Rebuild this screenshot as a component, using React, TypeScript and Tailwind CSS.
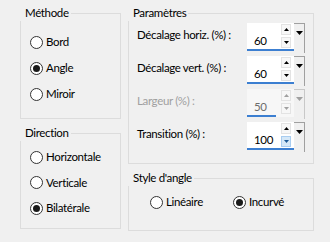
const FONT = "font-['Segoe_UI','Lato',sans-serif] tracking-[-0.35px]";

function Radio({ label, checked }: { label: string; checked?: boolean }) {
  return (
    <div className="flex h-[14px] items-center">
      <span className="flex h-[13px] w-[13px] shrink-0 items-center justify-center rounded-full border border-[#333] bg-white">
        {checked && <span className="h-[7px] w-[7px] rounded-full bg-[#1a1a1a]" />}
      </span>
      <span className="ml-[3px] whitespace-nowrap leading-[16px]">{label}</span>
    </div>
  );
}

function Group({
  title,
  className,
  children,
}: {
  title: string;
  className: string;
  children: React.ReactNode;
}) {
  return (
    <div className={`relative border border-[#dcdcdc] ${className}`}>
      <span className="absolute left-[-1px] top-[-9px] whitespace-nowrap bg-[#f0f0f0] pl-[5px] pr-[2px] leading-[16px]">
        {title}
      </span>
      {children}
    </div>
  );
}

function Arrow({ up, color }: { up?: boolean; color: string }) {
  return (
    <svg width="5" height="3" viewBox="0 0 5 3">
      <path d={up ? "M0 3 L2.5 0 L5 3 Z" : "M0 0 L5 0 L2.5 3 Z"} fill={color} />
    </svg>
  );
}

function Spin({
  value,
  disabled,
  downHover,
}: {
  value: string;
  disabled?: boolean;
  downHover?: boolean;
}) {
  const arrow = disabled ? "#a0a0a0" : "#000";
  return (
    <div className="flex h-[30px] w-[58px] shrink-0">
      <div
        className={`relative flex h-[28px] w-[47px] ${disabled ? "bg-[#f7f7f7]" : "bg-white"}`}
      >
        <span
          className={`flex-1 pl-[7px] pt-[11px] leading-[14px] ${disabled ? "text-[#6d6d6d]" : "text-black"}`}
        >
          {value}
        </span>
        <div className="mr-[3px] flex w-[10px] flex-col gap-[2px] pt-[1px]">
          <div className="flex h-[11px] items-center justify-center border border-[#e3e3e3] bg-[#f7f7f7]">
            <Arrow up color={arrow} />
          </div>
          <div
            className={`flex h-[11px] items-center justify-center border ${downHover ? "border-[#a9cdf0] bg-[#d5e8f8]" : "border-[#e3e3e3] bg-[#f7f7f7]"}`}
          >
            <Arrow color={downHover ? "#1e5a96" : arrow} />
          </div>
        </div>
        <div
          className={`absolute bottom-0 left-0 h-[2px] bg-[#3c7fd1] ${disabled ? "w-[29px]" : "w-[47px]"}`}
        />
      </div>
      <div
        className={`flex w-[11px] justify-center border-r border-t pt-[7px] ${disabled ? "border-[#c8c8c8]" : "border-[#a0a0a0]"}`}
      >
        <svg width="7" height="4" viewBox="0 0 7 4">
          <path d="M0 0 L7 0 L3.5 4 Z" fill={arrow} />
        </svg>
      </div>
    </div>
  );
}

function Row({
  label,
  value,
  disabled,
  downHover,
}: {
  label: string;
  value: string;
  disabled?: boolean;
  downHover?: boolean;
}) {
  return (
    <div className="flex h-[30px] items-start">
      <span
        className={`mt-[4px] flex-1 whitespace-nowrap leading-[16px] ${disabled ? "text-[#a0a0a0]" : "text-black"}`}
      >
        {label}
      </span>
      <Spin value={value} disabled={disabled} downHover={downHover} />
    </div>
  );
}

export default function App() {
  return (
    <div
      className={`flex h-[242px] w-[330px] gap-[7px] bg-[#f0f0f0] pl-[20px] pt-[13px] text-[11.5px] text-black ${FONT}`}
    >
      <div className="flex w-[101px] flex-col gap-[14px]">
        <Group title="Méthode" className="h-[106px]">
          <div className="flex flex-col gap-[12px] pl-[9px] pt-[21px]">
            <Radio label="Bord" />
            <Radio label="Angle" checked />
            <Radio label="Miroir" />
          </div>
        </Group>
        <Group title="Direction" className="h-[96px]">
          <div className="flex flex-col gap-[11.5px] pl-[9px] pt-[16px]">
            <Radio label="Horizontale" />
            <Radio label="Verticale" />
            <Radio label="Bilatérale" checked />
          </div>
        </Group>
      </div>
      <div className="flex w-[186px] flex-col gap-[14px]">
        <Group title="Paramètres" className="h-[151px]">
          <div className="flex flex-col gap-[3px] pl-[8px] pr-[8px] pt-[9px]">
            <Row label="Décalage horiz. (%) :" value="60" />
            <Row label="Décalage vert. (%) :" value="60" />
            <Row label="Largeur (%) :" value="50" disabled />
            <Row label="Transition (%) :" value="100" downHover />
          </div>
        </Group>
        <Group title="Style d'angle" className="h-[53px]">
          <div className="flex pl-[21px] pt-[16px]">
            <div className="w-[83px]">
              <Radio label="Linéaire" />
            </div>
            <Radio label="Incurvé" checked />
          </div>
        </Group>
      </div>
    </div>
  );
}
